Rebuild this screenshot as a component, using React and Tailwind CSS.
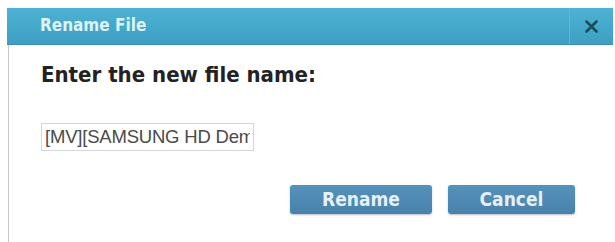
export default function App() {
  return (
    <div className="w-[615px] h-[242px] bg-white pt-2 pl-[7px] pr-[2px] overflow-hidden">
      <div className="flex flex-col h-full">
        <div className="flex h-[37px] items-stretch bg-gradient-to-b from-[#4db2d3] to-[#3c9fc3] border-b border-[#3a8fb0]">
          <div
            className="flex-1 flex items-center pl-[33px] text-[17px] font-bold text-[#dff3f9]"
            style={{ fontFamily: "Tahoma, 'DejaVu Sans Condensed', 'DejaVu Sans', sans-serif" }}
          >
            Rename File
          </div>
          <button className="w-[44px] flex items-center justify-center border-l border-[#5bb8d7]">
            <svg width="13" height="13" viewBox="0 0 13 13">
              <path d="M1.5 1.5 L11.5 11.5 M11.5 1.5 L1.5 11.5" stroke="#1a4c5e" strokeWidth="2.6" strokeLinecap="round" />
            </svg>
          </button>
        </div>
        <div className="flex-1 border-l border-[#c8c8c8] ml-px pl-[32px] pt-[17px]">
          <div
            className="text-[22px] font-bold text-[#222] leading-[26px]"
            style={{ fontFamily: "Tahoma, 'DejaVu Sans Condensed', 'DejaVu Sans', sans-serif" }}
          >
            Enter the new file name:
          </div>
          <input
            readOnly
            value="[MV][SAMSUNG HD Demo].mp4"
            className="mt-[35px] w-[213px] h-[28px] border border-[#d6d6d6] px-[3px] text-[18.5px] tracking-[-0.2px] text-[#4a4a4a] outline-none"
            style={{ fontFamily: "'Liberation Sans', Arial, sans-serif" }}
          />
          <div className="flex gap-[16px] mt-[34px] pl-[249px]">
            <button
              className="w-[142px] h-[29px] rounded-[3px] bg-gradient-to-b from-[#5592bb] to-[#4882ac] text-[#e6f0f6] text-[19px] font-bold leading-none shadow-[0_1px_2px_rgba(0,0,0,0.25)]"
              style={{ fontFamily: "Tahoma, 'DejaVu Sans Condensed', 'DejaVu Sans', sans-serif" }}
            >
              Rename
            </button>
            <button
              className="w-[127px] h-[29px] rounded-[3px] bg-gradient-to-b from-[#5592bb] to-[#4882ac] text-[#e6f0f6] text-[19px] font-bold leading-none shadow-[0_1px_2px_rgba(0,0,0,0.25)]"
              style={{ fontFamily: "Tahoma, 'DejaVu Sans Condensed', 'DejaVu Sans', sans-serif" }}
            >
              Cancel
            </button>
          </div>
        </div>
      </div>
    </div>
  );
}
